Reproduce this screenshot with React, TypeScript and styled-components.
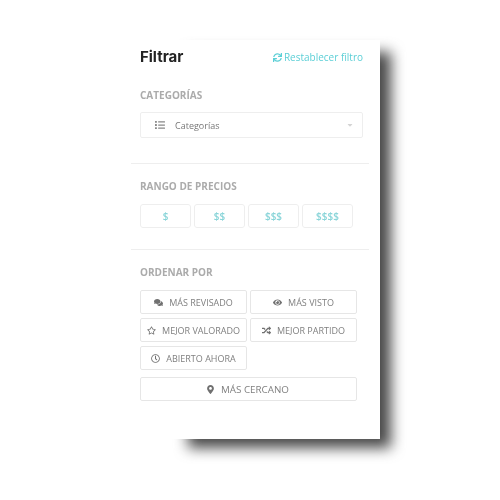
import React from "react";
import styled, { createGlobalStyle } from "styled-components";
import { FaSync, FaList, FaComments, FaEye, FaRegStar, FaRandom, FaRegClock, FaMapMarkerAlt, FaCaretDown } from "react-icons/fa";

const Global = createGlobalStyle`
  html, body { margin: 0; padding: 0; background: #fff; }
  body { width: 500px; height: 500px; overflow: hidden; font-family: "Open Sans", "Liberation Sans", sans-serif; }
`;
const Page = styled.div`
  width: 500px; height: 500px; padding: 40px 120px 0 122px; box-sizing: border-box;
  position: relative; isolation: isolate;
`;
const Panel = styled.div`
  position: relative; width: 258px; height: 399px; background: #fff; box-sizing: border-box;
  padding: 0 11px 0 9px;
  &::before {
    content: ""; position: absolute; z-index: -1; left: 66px; top: 12px; width: 203px; height: 396px;
    background: #484848; filter: blur(7px);
  }
`;
const Section = styled.section<{ $h: number; $top: number; $line?: boolean }>`
  height: ${p => p.$h}px; box-sizing: border-box; padding: ${p => p.$top}px 6px 0 9px;
  border-bottom: ${p => (p.$line ? "1px solid #eeeeee" : "none")};
  filter: blur(0.35px);
`;
const Head = styled.div`
  display: flex; justify-content: space-between; align-items: center; height: 18px; margin-bottom: 22px;
`;
const Title = styled.h2`
  margin: 0; font: 700 15px/18px Inter, "Liberation Sans", sans-serif; color: #222;
`;
const Reset = styled.a`
  display: flex; align-items: center; gap: 2px; font-size: 10px; line-height: 14px; color: #5ccfd6;
  svg { width: 9px; height: 9px; }
`;
const Label = styled.h3<{ $mb: number }>`
  margin: 0 0 ${p => p.$mb}px; font-size: 10px; font-weight: 700; line-height: 14px; color: #ababab;
`;
const Select = styled.div`
  display: flex; align-items: center; height: 26px; box-sizing: border-box; border: 1px solid #eee; border-radius: 2px;
  padding: 0 8px 0 14px; font-size: 9px; color: #777;
  svg:first-child { width: 10px; height: 10px; color: #888; margin-right: 10px; }
  span { flex: 1; }
  svg:last-child { width: 8px; height: 8px; color: #d4d4d4; }
`;
const Prices = styled.div`
  display: grid; grid-template-columns: repeat(4, 51px); gap: 3px;
`;
const Price = styled.div`
  height: 24px; display: flex; align-items: center; justify-content: center; box-sizing: border-box;
  border: 1px solid #eee; border-radius: 3px; font-size: 10px; font-weight: 600; color: #8ad5d9;
`;
const Sorts = styled.div`
  display: grid; grid-template-columns: 107px 107px; gap: 4px 3px;
`;
const Sort = styled.div<{ $wide?: boolean }>`
  height: 24px; display: flex; align-items: center; justify-content: center; gap: 6px; box-sizing: border-box;
  border: 1px solid #e6e6e6; border-radius: 2px; font-size: 9px; color: #808080; white-space: nowrap;
  ${p => p.$wide && "grid-column: 1 / 3; margin-top: 3px; font-size: 9.8px; padding-right: 2px;"}
  svg { width: 9px; height: 9px; color: #707070; flex: none; }
`;

export default function App() {
  return (
    <Page>
      <Global />
      <Panel>
        <Section $h={124} $top={8} $line>
          <Head>
            <Title>Filtrar</Title>
            <Reset><FaSync />Restablecer filtro</Reset>
          </Head>
          <Label $mb={10}>CATEGORÍAS</Label>
          <Select><FaList /><span>Categorías</span><FaCaretDown /></Select>
        </Section>
        <Section $h={86} $top={15} $line>
          <Label $mb={11}>RANGO DE PRECIOS</Label>
          <Prices>
            {["$", "$$", "$$$", "$$$$"].map(t => <Price key={t}>{t}</Price>)}
          </Prices>
        </Section>
        <Section $h={180} $top={15}>
          <Label $mb={11}>ORDENAR POR</Label>
          <Sorts>
            <Sort><FaComments />MÁS REVISADO</Sort>
            <Sort><FaEye />MÁS VISTO</Sort>
            <Sort><FaRegStar />MEJOR VALORADO</Sort>
            <Sort><FaRandom />MEJOR PARTIDO</Sort>
            <Sort><FaRegClock />ABIERTO AHORA</Sort>
            <Sort $wide><FaMapMarkerAlt />MÁS CERCANO</Sort>
          </Sorts>
        </Section>
      </Panel>
    </Page>
  );
}
